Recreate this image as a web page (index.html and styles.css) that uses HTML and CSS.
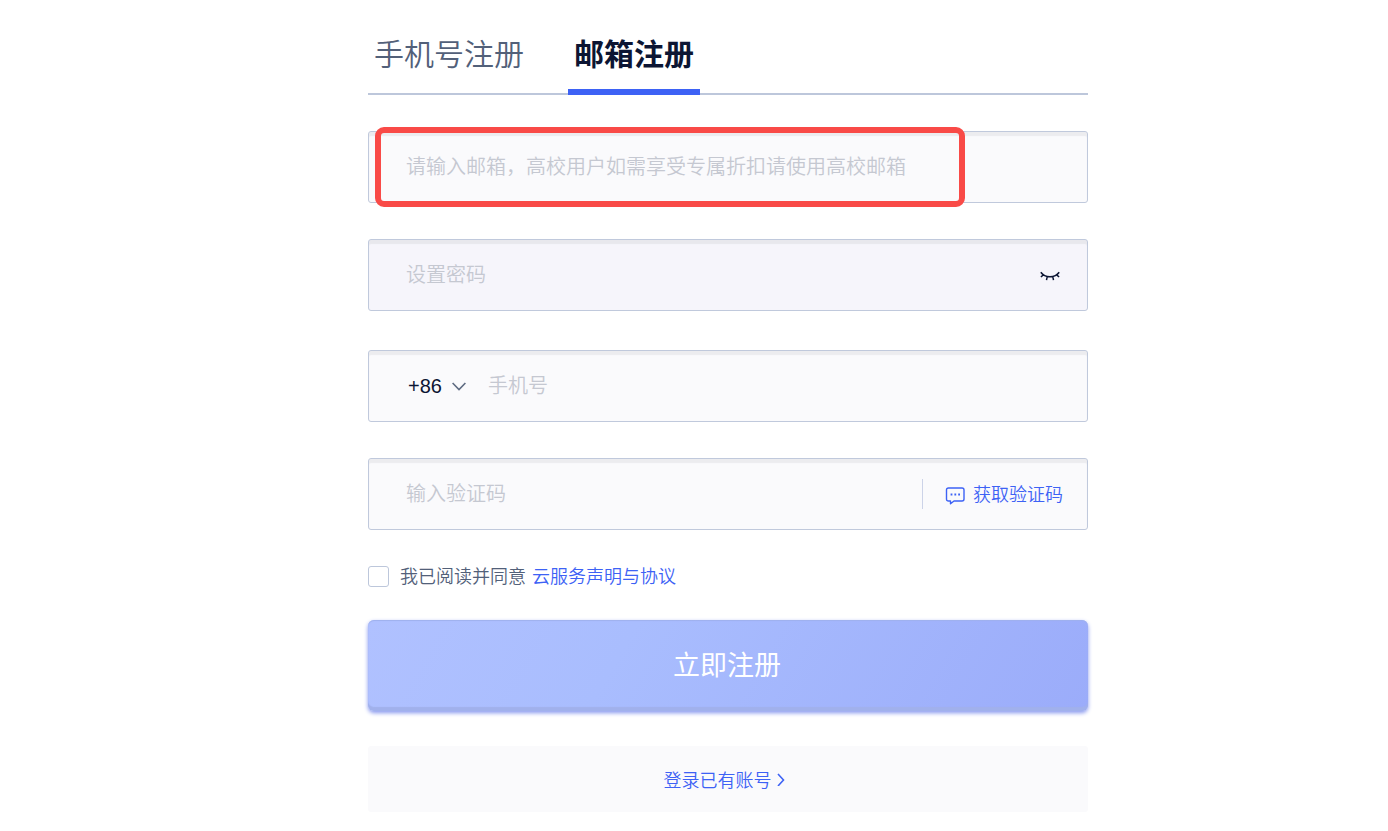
FILE: index.html
```html
<!DOCTYPE html>
<html lang="zh-CN">
<head>
  <meta charset="utf-8">
  <meta name="viewport" content="width=device-width, initial-scale=1">
  <title>邮箱注册</title>
  <link rel="stylesheet" href="styles.css">
</head>
<body>
  <main class="register">
    <nav class="tabs">
      <button type="button" class="tab">手机号注册</button>
      <button type="button" class="tab active">邮箱注册</button>
    </nav>

    <form class="form">
      <div class="field">
        <input type="email" class="field-input" aria-label="邮箱" placeholder="请输入邮箱，高校用户如需享受专属折扣请使用高校邮箱">
        <div class="highlight"></div>
      </div>

      <div class="field password">
        <input type="password" class="field-input" aria-label="设置密码" placeholder="设置密码">
        <button type="button" class="eye" aria-label="显示密码">
          <svg width="20" height="12" viewBox="0 0 20 12" fill="none" stroke="#0c1533" stroke-width="1.5">
            <path d="M0.8 1.2Q4 5.7 10 5.7T19.2 1.2M3.6 3.6L0.9 6M16.4 3.6L19.1 6M7.2 5.6L6.5 9.2M12.8 5.6L13.5 9.2"/>
          </svg>
        </button>
      </div>

      <div class="field phone">
        <div class="area">
          <select class="area-select" aria-label="国家区号">
            <option>+86</option>
          </select>
          <svg class="area-arrow" width="14" height="9" viewBox="0 0 14 9" fill="none" stroke="#5e6b82" stroke-width="1.6">
            <path d="M0.6 1L7 7.5L13.4 1"/>
          </svg>
        </div>
        <input type="tel" class="field-input" aria-label="手机号" placeholder="手机号">
      </div>

      <div class="field">
        <input type="text" class="field-input" aria-label="输入验证码" placeholder="输入验证码">
        <button type="button" class="get-code">
          <svg width="20" height="18" viewBox="0 0 20 18" fill="none" stroke="#3d62f5" stroke-width="1.4">
            <path d="M3.5 1H17Q19 1 19 3V12Q19 14 17 14H9L5.5 16.8V14H3.5Q1.5 14 1.5 12V3Q1.5 1 3.5 1Z" stroke-linejoin="round"/>
            <path d="M5.6 7.5H7.4M9.4 7.5H11.2M13.2 7.5H15" stroke-width="1.8"/>
          </svg>
          <span>获取验证码</span>
        </button>
      </div>

      <div class="agree">
        <input type="checkbox" id="agree" class="agree-check">
        <label for="agree">我已阅读并同意</label>
        <a href="#">云服务声明与协议</a>
      </div>

      <button type="submit" class="submit">立即注册</button>
    </form>

    <a href="#" class="login-link">
      <span>登录已有账号</span>
      <svg width="8" height="14" viewBox="0 0 8 14" fill="none" stroke="#3d62f5" stroke-width="1.6">
        <path d="M1 2L6.5 8L1 14"/>
      </svg>
    </a>
  </main>
</body>
</html>
```

FILE: styles.css
```css
* { box-sizing: border-box; }
body {
  margin: 0;
  padding: 20px 0 20px 68px;
  background: #fff;
  color: #526079;
  font-family: "Liberation Sans", "Noto Sans CJK SC", sans-serif;
  font-size: 18px;
  font-weight: 350;
}
button, input, select { font: inherit; }
button { border: 0; padding: 0; background: none; cursor: pointer; }
a { color: #3d62f5; text-decoration: none; }
svg { flex: none; }

.register { max-width: 720px; margin: 0 auto; }

.tabs {
  display: flex;
  gap: 38px;
  border-bottom: 2px solid #bdc7db;
}
.tab {
  height: 75px;
  margin-bottom: -2px;
  padding: 0 6px 5px;
  border-bottom: 6px solid transparent;
  color: #526079;
  font-size: 30px;
}
.tab.active {
  border-color: #3d62f5;
  color: #0c1533;
  font-weight: 700;
}

.form { margin-top: 36px; }
.field {
  position: relative;
  display: flex;
  align-items: center;
  height: 72px;
  margin-bottom: 36px;
  padding: 0 24px 0 37px;
  border: 1px solid #c0c9dc;
  border-radius: 3px;
  background: #fafafc;
  box-shadow: inset 0 4px 1px #ececef;
}
.field-input {
  flex: 1;
  min-width: 0;
  padding: 0;
  border: 0;
  outline: 0;
  background: transparent;
  color: #0c1533;
  font-size: 20px;
}
.field-input::placeholder { color: #c5c8d1; opacity: 1; }

/* red frame over the email field */
.highlight {
  position: absolute;
  top: -5px;
  bottom: -5px;
  left: 6px;
  right: 122px;
  border: 6px solid #f94a47;
  border-radius: 9px;
  pointer-events: none;
}

.password {
  margin-bottom: 39px;
  padding-right: 27px;
  background: #f6f5fb;
  box-shadow: inset 0 4px 1px #e8e8ed;
}
.eye { display: flex; padding-top: 4px; }

.area {
  display: flex;
  align-items: center;
  margin-right: 22px;
}
.area-select {
  width: 46px;
  padding: 0 0 0 2px;
  border: 0;
  appearance: none;
  background: transparent;
  color: #0c1533;
  font-size: 20px;
  font-weight: 400;
}

.get-code {
  display: flex;
  align-items: center;
  gap: 8px;
  height: 30px;
  padding-left: 22px;
  border-left: 1px solid #ccd3e8;
  color: #3d62f5;
}
.get-code svg { margin-top: 3px; }
.get-code span { padding-bottom: 2px; }

.agree {
  display: flex;
  align-items: center;
  height: 20px;
}
.agree-check {
  appearance: none;
  width: 21px;
  height: 21px;
  margin: 0 11px 0 0;
  border: 1px solid #bdc7db;
  border-radius: 3px;
  background: #fff;
}
.agree-check:checked { background: #3d62f5; }
.agree label, .agree a { padding-bottom: 3px; }
.agree a { margin-left: 6px; }

.submit {
  display: block;
  width: 100%;
  height: 91px;
  margin-top: 34px;
  padding: 0 2px 4px 0;
  border-radius: 6px;
  background: linear-gradient(120deg, #b0c1ff, #a9bdfe 35%, #9bacfa);
  box-shadow: inset 0 -4px 1px #a1b1ec, inset 0 1px 1px #9fb1ee, 0 2px 4px #8797ef;
  color: #fff;
  font-size: 27px;
  font-weight: 400;
}

.login-link {
  display: flex;
  align-items: center;
  justify-content: center;
  gap: 5px;
  height: 66px;
  margin-top: 35px;
  padding-right: 8px;
  border-radius: 3px;
  background: #fafafc;
}
```
